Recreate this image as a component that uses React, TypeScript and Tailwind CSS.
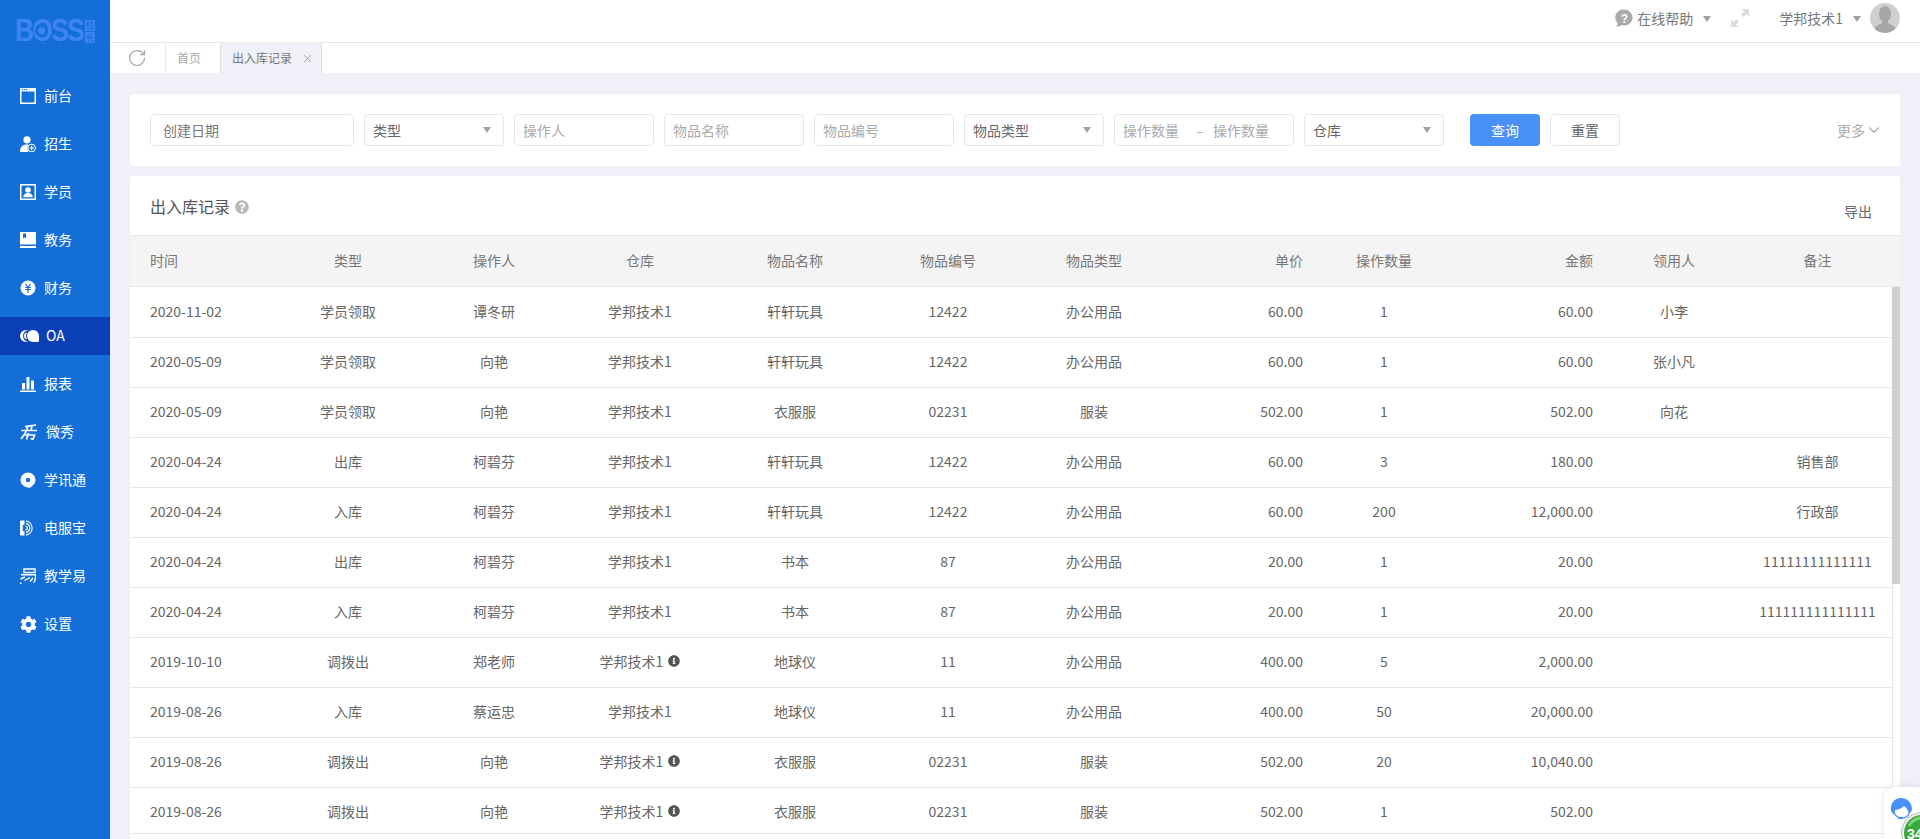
import React from "react";
import { FaCog, FaInfoCircle, FaQuestionCircle } from "react-icons/fa";
import { RotateCw, ChevronDown, X } from "lucide-react";

const Ic = ({ children }: { children: React.ReactNode }) => (
  <svg viewBox="0 0 16 16" width="16" height="16" fill="white" className="shrink-0">
    {children}
  </svg>
);

const nav: { name: string; icon: React.ReactNode; active?: boolean; wide?: boolean }[] = [
  {
    name: "前台",
    icon: (
      <Ic>
        <path fillRule="evenodd" d="M0 0h16v16H0zM1.500 3.500v11h13v-11z" />
        <rect x="2" y="1" width="1.200" height="1.200" fill="#136ed8" />
        <rect x="4" y="1" width="1.200" height="1.200" fill="#136ed8" />
        <rect x="6" y="1" width="1.200" height="1.200" fill="#136ed8" />
      </Ic>
    ),
  },
  {
    name: "招生",
    icon: (
      <Ic>
        <circle cx="7" cy="3.800" r="3.600" />
        <path d="M0 16c0-5 2.500-7.500 6.500-7.500 1.500 0 2.500.3 3.500 1L8 16z" />
        <circle cx="11.700" cy="12" r="4.300" fill="#136ed8" />
        <circle cx="11.700" cy="12" r="3.700" fill="none" stroke="white" strokeWidth="1.100" />
        <path d="M11.700 9.800v4.400M9.500 12h4.400" stroke="white" strokeWidth="1.100" />
      </Ic>
    ),
  },
  {
    name: "学员",
    icon: (
      <Ic>
        <path fillRule="evenodd" d="M0 0h16v16H0zM1.500 1.500v13h13v-13z" />
        <circle cx="8" cy="6" r="2.800" />
        <path d="M3.200 13.200c.3-3 2-4.200 4.800-4.200s4.500 1.200 4.800 4.200z" />
      </Ic>
    ),
  },
  {
    name: "教务",
    icon: (
      <Ic>
        <path fillRule="evenodd" d="M0 0h16v12.500H0zM3 1.500v5l1.500-1.200L6 6.500v-5z" />
        <rect x="0" y="14" width="16" height="2" />
      </Ic>
    ),
  },
  {
    name: "财务",
    icon: (
      <Ic>
        <path
          fillRule="evenodd"
          d="M8 .5a7.500 7.500 0 1 1 0 15 7.500 7.500 0 0 1 0-15zM4.900 3.800 7 7H5.200v1.100h2.200V9H5.200v1.100h2.200V13h1.200v-2.900h2.200V9H8.600v-.9h2.200V7H9l2.100-3.200H9.800L8 6.600 6.200 3.800z"
        />
      </Ic>
    ),
  },
  {
    name: "OA",
    active: true,
    wide: true,
    icon: (
      <svg viewBox="0 0 19 12" width="19" height="12" fill="white" className="shrink-0">
        <path fillRule="evenodd" d="M6 0h3a6 6 0 0 0 0 12H6A6 6 0 0 1 6 0zM4 6a3.500 3.500 0 0 0 3 3.400 7 7 0 0 1 0-6.800A3.500 3.500 0 0 0 4 6z" />
        <path d="M13 0a6 6 0 0 1 6 6v4.500a1.500 1.500 0 0 1-1.500 1.500H13A6 6 0 0 1 13 0z" />
      </svg>
    ),
  },
  {
    name: "报表",
    icon: (
      <Ic>
        <rect x="2" y="7" width="3" height="6.500" />
        <rect x="6.500" y="1" width="3" height="12.500" />
        <rect x="11" y="4.500" width="3" height="9" />
        <rect x="0" y="14.500" width="16" height="1.500" />
      </Ic>
    ),
  },
  {
    name: "微秀",
    wide: true,
    icon: (
      <svg viewBox="0 0 18 16" width="18" height="16" className="shrink-0">
        <g stroke="white" strokeWidth="1.700" fill="none">
          <path d="M5 2.600 16 1M1.500 6.500h15.500M8.500 1.500 5 9.500 1 15M12 2l-1 4" />
          <path d="M4.500 11h10L13 15.200l-2.500-.7M8.500 9 6.500 15.500" />
        </g>
      </svg>
    ),
  },
  {
    name: "学讯通",
    icon: (
      <Ic>
        <path
          fillRule="evenodd"
          d="M8 .5a7.500 7.500 0 0 1 7.500 7.500c0 3.800-3 6-6 8-.5.3-1 .2-1-.5-4-.2-8-3-8-7.500A7.500 7.500 0 0 1 8 .5zM8 5.800a2.200 2.200 0 1 0 0 4.400 2.200 2.200 0 0 0 0-4.400z"
        />
      </Ic>
    ),
  },
  {
    name: "电服宝",
    icon: (
      <Ic>
        <path d="M0 1.500Q0 .5 1 .5h3.500v4.300H2.800v6.400h1.700v4.300H1q-1 0-1-1z" />
        <g fill="none" stroke="white" strokeWidth="1.200">
          <path d="M6 .8a7.300 7.300 0 0 1 0 14.400" />
          <path d="M6 3.400a4.700 4.700 0 0 1 0 9.200" />
          <path d="M5.500 6a2 2 0 0 1 0 4" />
        </g>
      </Ic>
    ),
  },
  {
    name: "教学易",
    icon: (
      <Ic>
        <g fill="none" stroke="white" strokeWidth="1.400">
          <path d="M4 1h11v3.500H4zM1 6.800h14.500c0 4-.5 7-2 7.500" />
          <path d="M.5 11 5 9M4.500 12.500 10 9.500M10 13.500 13 10" />
        </g>
        <rect x="0" y="14.500" width="1.500" height="1.500" />
      </Ic>
    ),
  },
  { name: "设置", icon: <FaCog size={17} color="white" className="shrink-0" /> },
];

const Caret = () => (
  <span className="block w-0 h-0 border-l-[4.5px] border-r-[4.5px] border-t-[6px] border-l-transparent border-r-transparent border-t-[#a0a0a0]" />
);

const Select = ({ label, w = "w-[140px]" }: { label: string; w?: string }) => (
  <div className={`${w} h-8 border border-[#e7e7e7] rounded-[4px] flex items-center justify-between pl-2 pr-3 text-[#666] shrink-0`}>
    <span>{label}</span>
    <Caret />
  </div>
);

const Input = ({ label }: { label: string }) => (
  <input
    placeholder={label}
    className="w-[140px] h-8 border border-[#e7e7e7] rounded-[4px] px-2 text-sm placeholder:text-[#aaa] shrink-0 outline-none"
  />
);

type Row = [string, string, string, boolean, string, string, string, string, string, string, string, string];
const rows: Row[] = [
  ["2020-11-02", "学员领取", "谭冬研", false, "轩轩玩具", "12422", "办公用品", "60.00", "1", "60.00", "小李", ""],
  ["2020-05-09", "学员领取", "向艳", false, "轩轩玩具", "12422", "办公用品", "60.00", "1", "60.00", "张小凡", ""],
  ["2020-05-09", "学员领取", "向艳", false, "衣服服", "02231", "服装", "502.00", "1", "502.00", "向花", ""],
  ["2020-04-24", "出库", "柯碧芬", false, "轩轩玩具", "12422", "办公用品", "60.00", "3", "180.00", "", "销售部"],
  ["2020-04-24", "入库", "柯碧芬", false, "轩轩玩具", "12422", "办公用品", "60.00", "200", "12,000.00", "", "行政部"],
  ["2020-04-24", "出库", "柯碧芬", false, "书本", "87", "办公用品", "20.00", "1", "20.00", "", "11111111111111"],
  ["2020-04-24", "入库", "柯碧芬", false, "书本", "87", "办公用品", "20.00", "1", "20.00", "", "111111111111111"],
  ["2019-10-10", "调拨出", "郑老师", true, "地球仪", "11", "办公用品", "400.00", "5", "2,000.00", "", ""],
  ["2019-08-26", "入库", "蔡运忠", false, "地球仪", "11", "办公用品", "400.00", "50", "20,000.00", "", ""],
  ["2019-08-26", "调拨出", "向艳", true, "衣服服", "02231", "服装", "502.00", "20", "10,040.00", "", ""],
  ["2019-08-26", "调拨出", "向艳", true, "衣服服", "02231", "服装", "502.00", "1", "502.00", "", ""],
];

const heads = ["时间", "类型", "操作人", "仓库", "物品名称", "物品编号", "物品类型", "单价", "操作数量", "金额", "领用人", "备注"];
const widths = [140, 156, 136, 156, 154, 152, 140, 159, 122, 168, 122, 165];
const aligns = ["text-left pl-5", "text-center", "text-center", "text-center", "text-center", "text-center", "text-center", "text-right pr-5", "text-center", "text-right pr-5", "text-center", "text-center"];

export default function App() {
  return (
    <div
      className="relative flex w-full h-[839px] overflow-hidden bg-[#eff0f8] text-sm text-[#666]"
      style={{ fontFamily: '"Noto Sans CJK SC", "Noto Sans", sans-serif' }}
    >
      {/* sidebar */}
      <aside className="w-[110px] shrink-0 bg-[#136ed8] text-white">
        <div className="relative h-[77px] pt-[15px] pl-[15px] flex items-start" style={{ fontFamily: '"Liberation Sans", sans-serif' }}>
          <span className="block w-[70px] shrink-0">
            <span className="inline-block origin-left scale-x-[0.85] font-bold text-[31px] leading-[32px] tracking-[-2px] text-[#3f84f5]">
              BOSS
            </span>
          </span>
          <span className="absolute left-[35px] top-[24px] w-[13px] h-[13px] rounded-full bg-[#136ed8] flex items-center justify-center">
            <span className="block w-[7px] h-[7px] rounded-full bg-[#3f84f5]" />
          </span>
          <span className="mt-[5px] flex flex-col gap-[1px]" style={{ fontFamily: '"Noto Sans CJK SC", sans-serif' }}>
            <span className="block w-[10px] h-[11px] bg-[#3f84f5] text-[#136ed8] text-[9px] leading-[11px] text-center">校</span>
            <span className="block w-[10px] h-[11px] bg-[#3f84f5] text-[#136ed8] text-[9px] leading-[11px] text-center">长</span>
          </span>
        </div>
        <nav className="flex flex-col gap-[10px]">
          {nav.map((n) => (
            <div key={n.name} className={`h-[38px] flex items-center pl-5 ${n.active ? "bg-[#0b3fb5]" : ""}`}>
              <span className="w-4 flex justify-start">{n.icon}</span>
              <span className={`${n.wide ? "ml-[10px]" : "ml-2"} pb-[2px] text-sm text-white`}>{n.name}</span>
            </div>
          ))}
        </nav>
      </aside>

      <main className="flex-1 min-w-0 flex flex-col">
        {/* top bar */}
        <header className="h-[43px] shrink-0 bg-white border-b border-[#e8e8e8] flex items-center justify-end pr-5 pb-[6px] text-[#777]">
          <svg viewBox="0 0 18 18" width="18" height="18" className="shrink-0">
            <path
              fill="#aaa"
              d="M9.500.5a8 8 0 1 1-3 15.400C5 17 3 17.500 1 17.500c1-1 1.500-2.300 1.600-3.500A8 8 0 0 1 9.500.5z"
            />
            <text x="9.500" y="13.500" textAnchor="middle" fontSize="12" fontWeight="700" fill="white" fontFamily="Liberation Sans">?</text>
          </svg>
          <span className="ml-[4px]">在线帮助</span>
          <span className="ml-[10px] pt-[1px]">
            <Caret />
          </span>
          <svg viewBox="0 0 18 18" width="18" height="18" className="ml-[20px] shrink-0" fill="#dcdcdc">
            <path d="M10.500 0H18v7.500L15.500 5l-3 3L10 5.500l3-3zM7.500 18H0v-7.500L2.500 13l3-3L8 12.500l-3 3z" />
          </svg>
          <span className="ml-[30px]">学邦技术1</span>
          <span className="ml-[10px] pt-[1px]">
            <Caret />
          </span>
          <span className="ml-[9px] w-[30px] h-[30px] rounded-full bg-[#d0d0d0] overflow-hidden shrink-0">
            <svg viewBox="0 0 30 30" width="30" height="30" fill="#a6a6a6">
              <ellipse cx="15" cy="11" rx="6" ry="8" />
              <path d="M12 17h6v3l7 4v6H5v-6l7-4z" />
            </svg>
          </span>
        </header>

        {/* tabs */}
        <div className="h-[30px] shrink-0 bg-white flex items-stretch text-xs">
          <div className="w-14 flex items-center justify-center border-r border-[#e8e8e8] pr-[1px]">
            <RotateCw size={20} color="#aaa" strokeWidth={1.500} />
          </div>
          <div className="w-[54px] flex items-center pl-[11px] text-[#aaa]">首页</div>
          <div className="w-[102px] bg-[#eff0f8] border-x border-[#e0e0e8] flex items-center pl-[11px] text-[#777]">
            出入库记录
            <X size={13} color="#999" strokeWidth={1.500} className="ml-[9px]" />
          </div>
        </div>

        {/* content */}
        <div className="flex-1 min-h-0 pt-[21px] pl-5 pr-5 flex flex-col gap-[10px]">
          <section className="h-[72px] shrink-0 bg-white rounded-[4px] flex items-center pl-5 pr-[17px] gap-[10px]">
            <div className="w-[204px] h-8 border border-[#e7e7e7] rounded-[4px] flex items-center pl-3 text-[#777] shrink-0">创建日期</div>
            <Select label="类型" />
            <Input label="操作人" />
            <Input label="物品名称" />
            <Input label="物品编号" />
            <Select label="物品类型" />
            <div className="w-[180px] h-8 border border-[#e7e7e7] rounded-[4px] flex items-center pl-2 text-[#aaa] shrink-0">
              <span>操作数量</span>
              <span className="ml-[17px] w-2 text-center">–</span>
              <span className="ml-[9px]">操作数量</span>
            </div>
            <Select label="仓库" />
            <button className="ml-4 w-[70px] h-8 rounded-[4px] bg-[#4a90f9] text-white text-sm shrink-0">查询</button>
            <button className="w-[70px] h-8 rounded-[4px] border border-[#e7e7e7] text-[#666] text-sm shrink-0">重置</button>
            <div className="ml-auto flex items-center text-[#aaa]">
              更多
              <ChevronDown size={18} color="#aaa" strokeWidth={1.500} />
            </div>
          </section>

          <section className="flex-1 min-h-0 bg-white rounded-t-[4px] flex flex-col">
            <div className="h-[59px] shrink-0 flex items-center justify-between pl-5 pr-[28px]">
              <div className="flex items-center">
                <span className="text-base text-[#555]">出入库记录</span>
                <FaQuestionCircle size={14} color="#b8b8b8" className="ml-[5px] mt-[2px]" />
              </div>
              <span className="mt-[10px] text-[#666]">导出</span>
            </div>
            <div className="relative h-[599px] shrink-0 overflow-hidden border-b border-[#e8e8e8]">
              <table className="w-full table-fixed border-separate border-spacing-0">
                <colgroup>
                  {widths.map((w, i) => (
                    <col key={i} style={{ width: w }} />
                  ))}
                </colgroup>
                <thead>
                  <tr>
                    {heads.map((h, i) => (
                      <th
                        key={h}
                        className={`h-[52px] pb-[2px] bg-[#f4f4f4] border-y border-[#e8e8e8] font-normal text-[#777] ${aligns[i]}`}
                      >
                        {h}
                      </th>
                    ))}
                  </tr>
                </thead>
                <tbody>
                  {rows.map((r, ri) => {
                    const cells = [r[0], r[1], r[2], null, r[4], r[5], r[6], r[7], r[8], r[9], r[10], r[11]];
                    return (
                      <tr key={ri}>
                        {cells.map((c, i) => (
                          <td
                            key={i}
                            className={`${ri === 0 ? "h-[51px] pb-[3px]" : "h-[50px] pb-[4px]"} border-b border-[#e8e8e8] text-[#666] ${aligns[i]}`}
                          >
                            {i === 3 ? (
                              <span className="inline-flex items-center justify-center">
                                学邦技术1
                                {r[3] && <FaInfoCircle size={12} color="#555" className="ml-[5px]" />}
                              </span>
                            ) : (
                              c
                            )}
                          </td>
                        ))}
                      </tr>
                    );
                  })}
                </tbody>
              </table>
              <div className="absolute right-0 top-[52px] bottom-0 w-2 bg-white border-l border-[#e8e8e8]">
                <div className="h-[297px] bg-[#cfcfcf] -ml-[1px] rounded-b-[1px]" />
              </div>
            </div>
          </section>
        </div>
      </main>

      {/* floating service widget */}
      <div className="absolute right-0 bottom-0 w-9 h-[52px] bg-white rounded-tl-[10px] shadow-[0_0_6px_rgba(0,0,0,0.12)] overflow-hidden">
        <svg viewBox="0 0 36 52" width="36" height="52">
          <path d="M7 24c-1-8 4-13 10-13s11 4 11 12l-3 4c-1-4-3-7-5-8-3 3-7 4-9 4l-1 5z" fill="#4a90f9" />
          <path d="M10 22c0 6 3 9 8 9M26 24c-1 4-4 7-8 7" fill="none" stroke="#4a90f9" strokeWidth="1.200" />
          <path d="M14 31h5" stroke="#4a90f9" strokeWidth="2" />
          <circle cx="38" cy="46" r="20.500" fill="#eee" stroke="#bbb" strokeWidth="1" />
          <circle cx="38" cy="46" r="18" fill="#3aa83a" />
          <path d="M24 38a17 17 0 0 1 16-9v4a12 12 0 0 0-14 7z" fill="#7ed67e" />
          <text x="23" y="52" fontSize="14" fontWeight="700" fill="white" fontFamily="Liberation Sans">34</text>
        </svg>
      </div>
    </div>
  );
}
